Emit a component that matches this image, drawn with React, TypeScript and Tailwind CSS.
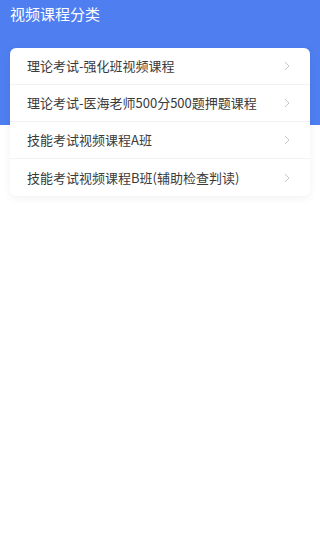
import React from 'react'

const items = [
  '理论考试-强化班视频课程',
  '理论考试-医海老师500分500题押题课程',
  '技能考试视频课程A班',
  '技能考试视频课程B班(辅助检查判读)',
]

export default function App() {
  return (
    <div
      className="relative min-h-[551px] w-full bg-white"
      style={{ fontFamily: '"Noto Sans CJK SC", "Noto Sans", sans-serif' }}
    >
      <div className="h-[125px] bg-[#4f7ef0]">
        <h1 className="px-[10px] pt-[4px] text-[15px] leading-[20px] text-white">视频课程分类</h1>
      </div>
      <div className="relative -mt-[77px] mx-[10px] rounded-md bg-white shadow-[0_2px_8px_rgba(0,0,0,0.06)]">
        {items.map((t, i) => (
          <div
            key={i}
            className={
              'flex h-[37px] items-center justify-between pl-[17px] pr-[20px] ' +
              (i < items.length - 1 ? 'border-b border-[#f2f2f2]' : '')
            }
          >
            <span className="text-[13px] text-[#3a3a3a]">{t}</span>
            <svg width="6" height="10" viewBox="0 0 6 10" fill="none">
              <path d="M1 1l4 4-4 4" stroke="#c8c8c8" strokeWidth="1" />
            </svg>
          </div>
        ))}
      </div>
    </div>
  )
}
